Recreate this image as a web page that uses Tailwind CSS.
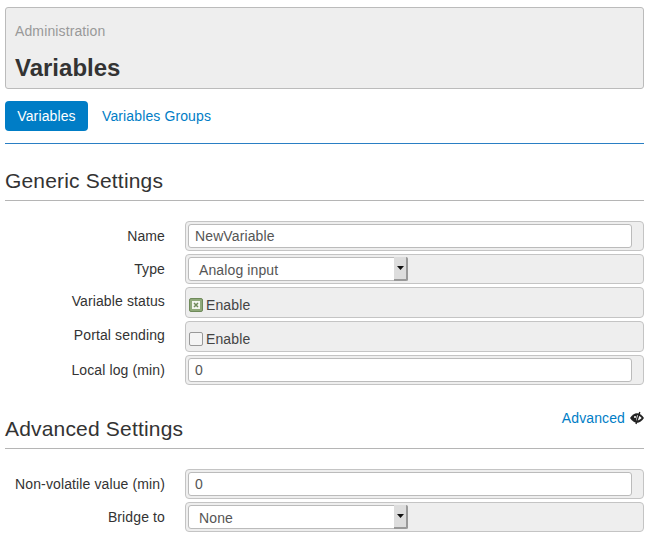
<!DOCTYPE html>
<html>
<head>
<script src="https://cdn.jsdelivr.net/npm/@tailwindcss/browser@4"></script>
</head>
<body class="bg-white font-['Liberation_Sans',Arial,sans-serif] text-[14px] tracking-[0.12px] text-[#333]">
<div class="w-[660px] h-[555px] overflow-hidden px-[5px] pt-[7px] box-border">
  <div class="w-[639px] h-[82px] bg-[#eeeeee] border border-[#bbbbbb] rounded-[3px] pl-[9px] pt-[15px] box-border">
    <div class="text-[14px] leading-[17px] text-[#999999]">Administration</div>
    <div class="text-[24px] leading-[28px] font-bold tracking-normal mt-[14px] text-[#333]">Variables</div>
  </div>
  <div class="flex mt-[12px] h-[30px] w-[639px] gap-[2px]">
    <a class="h-[30px] w-[83px] rounded-[4px] bg-[#007dc6] text-white flex items-center justify-center leading-[20px]">Variables</a>
    <a class="h-[30px] px-[12px] text-[#007dc6] flex items-center leading-[20px]">Variables Groups</a>
  </div>
  <div class="w-[639px] h-px bg-[#2a7fc4] mt-[12px]"></div>

  <div class="w-[639px] h-[57px] border-b border-[#b5b5b5] box-border text-[21px] tracking-[0.18px] leading-[22px] pt-[26px]">Generic Settings</div>

  <div class="w-[639px] mt-[20px] flex flex-col gap-[3px]">
    <div class="flex h-[30px]">
      <div class="w-[160px] shrink-0 text-right leading-[30px]">Name</div>
      <div class="ml-[20px] w-[459px] h-[30px] box-border bg-[#eeeeee] border border-[#c4c4c4] rounded-[4px] pl-[2px] pt-[2px]">
        <div class="w-[444px] h-[24px] box-border bg-white border border-[#bbbbbb] rounded-[3px] pl-[6px] leading-[22px] text-[#555]">NewVariable</div>
      </div>
    </div>
    <div class="flex h-[30px]">
      <div class="w-[160px] shrink-0 text-right leading-[30px]">Type</div>
      <div class="ml-[20px] w-[459px] h-[30px] box-border bg-[#eeeeee] border border-[#c4c4c4] rounded-[4px] pl-[2px] pt-[2px]">
        <div class="w-[220px] h-[24px] box-border bg-white border border-[#bbbbbb] rounded-[3px] pl-[10px] leading-[24px] text-[#555] relative">Analog input
          <div class="absolute right-[-1px] top-[-1px] w-[14px] h-[24px] bg-[#dddddd] border-r-2 border-b-2 border-[#999999] rounded-r-[2px] flex items-center justify-center">
            <svg width="7" height="4" viewBox="0 0 7 4"><path d="M0 0h7L3.500 4z" fill="#111"/></svg>
          </div>
        </div>
      </div>
    </div>
    <div class="flex h-[31px]">
      <div class="w-[160px] shrink-0 text-right leading-[29px]">Variable status</div>
      <div class="ml-[20px] w-[459px] h-[31px] box-border bg-[#eeeeee] border border-[#c4c4c4] rounded-[4px] pl-[3px] flex items-center gap-[3px] text-[#444] pt-[5px]">
        <div class="w-[14px] h-[14px] box-border rounded-[2px] bg-[#8fa97a] border border-[#6f8a5a] flex items-center justify-center">
          <svg width="8" height="8" viewBox="0 0 8 8"><path d="M0 0h8v8H0z" fill="#f2f5ee"/><path d="M2 2l4 4M6 2L2 6" stroke="#6f8a5a" stroke-width="1.500"/></svg>
        </div>
        <span>Enable</span>
      </div>
    </div>
    <div class="flex h-[31px]">
      <div class="w-[160px] shrink-0 text-right leading-[29px]">Portal sending</div>
      <div class="ml-[20px] w-[459px] h-[31px] box-border bg-[#eeeeee] border border-[#c4c4c4] rounded-[4px] pl-[3px] flex items-center gap-[3px] text-[#444] pt-[5px]">
        <div class="w-[14px] h-[14px] box-border rounded-[2px] bg-[#f4f4f4] border border-[#999999]"></div>
        <span>Enable</span>
      </div>
    </div>
    <div class="flex h-[30px]">
      <div class="w-[160px] shrink-0 text-right leading-[30px]">Local log (min)</div>
      <div class="ml-[20px] w-[459px] h-[30px] box-border bg-[#eeeeee] border border-[#c4c4c4] rounded-[4px] pl-[2px] pt-[2px]">
        <div class="w-[444px] h-[24px] box-border bg-white border border-[#bbbbbb] rounded-[3px] pl-[6px] leading-[22px] text-[#555]">0</div>
      </div>
    </div>
  </div>

  <div class="w-[639px] h-[64px] border-b border-[#b5b5b5] box-border relative">
    <div class="absolute left-0 top-[33px] text-[21px] tracking-[0.18px] leading-[22px]">Advanced Settings</div>
    <div class="absolute right-0 top-[24px] flex items-center gap-[5px]">
      <span class="text-[#007dc6] leading-[18px]">Advanced</span>
      <svg width="14" height="14" viewBox="0 0 14 14"><path d="M0 7C2 4 4.500 2.200 7 2.200S12 4 14 7c-2 3-4.500 4.800-7 4.800S2 10 0 7z" fill="#222"/><path d="M7 4.300c1.800.2 3.400 1.200 4.600 2.700C10.400 8.500 8.800 9.500 6 9.700z" fill="#fff"/><circle cx="5" cy="6" r="1" fill="#fff"/><path d="M9.800 1L6 13" stroke="#222" stroke-width="1.400"/></svg>
    </div>
  </div>

  <div class="w-[639px] mt-[20px] flex flex-col gap-[3px]">
    <div class="flex h-[30px]">
      <div class="w-[160px] shrink-0 text-right leading-[30px]">Non-volatile value (min)</div>
      <div class="ml-[20px] w-[459px] h-[30px] box-border bg-[#eeeeee] border border-[#c4c4c4] rounded-[4px] pl-[2px] pt-[2px]">
        <div class="w-[444px] h-[24px] box-border bg-white border border-[#bbbbbb] rounded-[3px] pl-[6px] leading-[22px] text-[#555]">0</div>
      </div>
    </div>
    <div class="flex h-[30px]">
      <div class="w-[160px] shrink-0 text-right leading-[30px]">Bridge to</div>
      <div class="ml-[20px] w-[459px] h-[30px] box-border bg-[#eeeeee] border border-[#c4c4c4] rounded-[4px] pl-[2px] pt-[2px]">
        <div class="w-[220px] h-[24px] box-border bg-white border border-[#bbbbbb] rounded-[3px] pl-[10px] leading-[24px] text-[#555] relative">None
          <div class="absolute right-[-1px] top-[-1px] w-[14px] h-[24px] bg-[#dddddd] border-r-2 border-b-2 border-[#999999] rounded-r-[2px] flex items-center justify-center">
            <svg width="7" height="4" viewBox="0 0 7 4"><path d="M0 0h7L3.500 4z" fill="#111"/></svg>
          </div>
        </div>
      </div>
    </div>
  </div>
</div>
</body>
</html>
